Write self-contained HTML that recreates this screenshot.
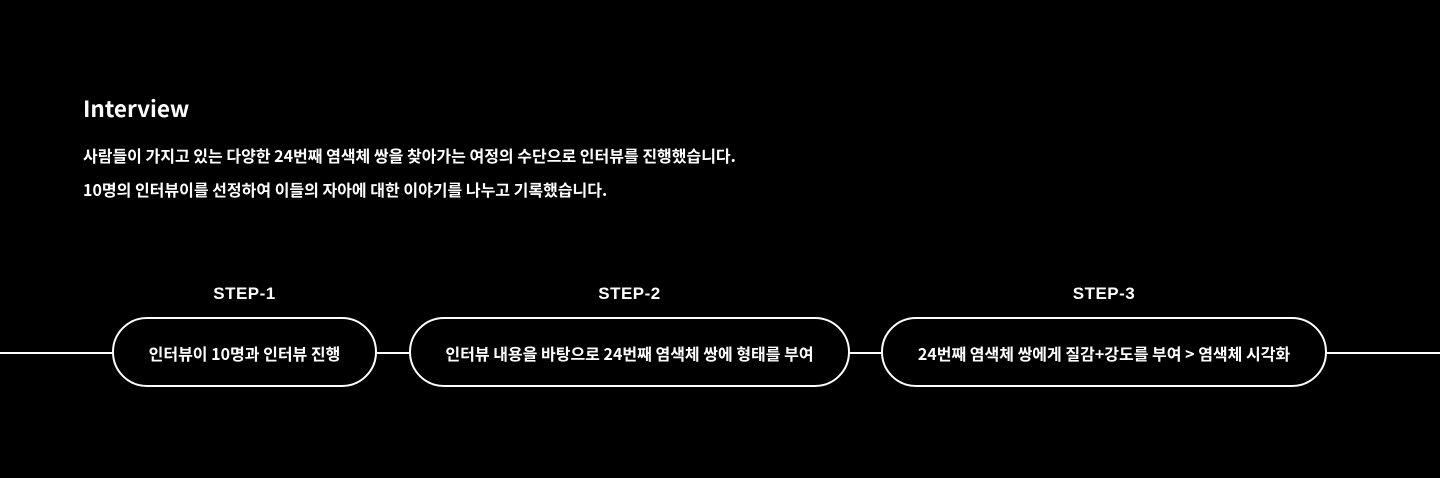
<!DOCTYPE html><html><head><meta charset="utf-8"><style>
body{margin:0;width:1440px;height:478px;background:#000;position:relative;overflow:hidden;color:#fff;font-family:"Noto Sans CJK KR","Liberation Sans",sans-serif}
.t{position:absolute;left:83px;font-weight:bold;white-space:nowrap;line-height:1.2}
.line{position:absolute;left:0;width:1440px;top:352px;height:2px;background:#fff}
.pill{position:absolute;top:317px;border:2px solid #fff;border-radius:36px;background:#000;display:flex;align-items:center;justify-content:center;font-size:16px;font-weight:bold;box-sizing:content-box;padding-top:1px;height:65px}
.s{position:absolute;top:284px;font-size:17px;font-weight:bold;text-align:center;font-family:"Liberation Sans",sans-serif;letter-spacing:.5px}
</style></head><body>
<div class="t" style="top:95px;font-size:22.5px">Interview</div>
<div class="t" style="top:146px;font-size:16px">사람들이 가지고 있는 다양한 24번째 염색체 쌍을 찾아가는 여정의 수단으로 인터뷰를 진행했습니다.</div>
<div class="t" style="top:180px;font-size:16px">10명의 인터뷰이를 선정하여 이들의 자아에 대한 이야기를 나누고 기록했습니다.</div>
<div class="line"></div>
<div class="s" style="left:112px;width:265px">STEP-1</div>
<div class="s" style="left:409px;width:441px">STEP-2</div>
<div class="s" style="left:881px;width:446px">STEP-3</div>
<div class="pill" style="left:112px;width:261px">인터뷰이 10명과 인터뷰 진행</div>
<div class="pill" style="left:409px;width:437px">인터뷰 내용을 바탕으로 24번째 염색체 쌍에 형태를 부여</div>
<div class="pill" style="left:881px;width:442px">24번째 염색체 쌍에게 질감+강도를 부여 &gt; 염색체 시각화</div>
</body></html>
